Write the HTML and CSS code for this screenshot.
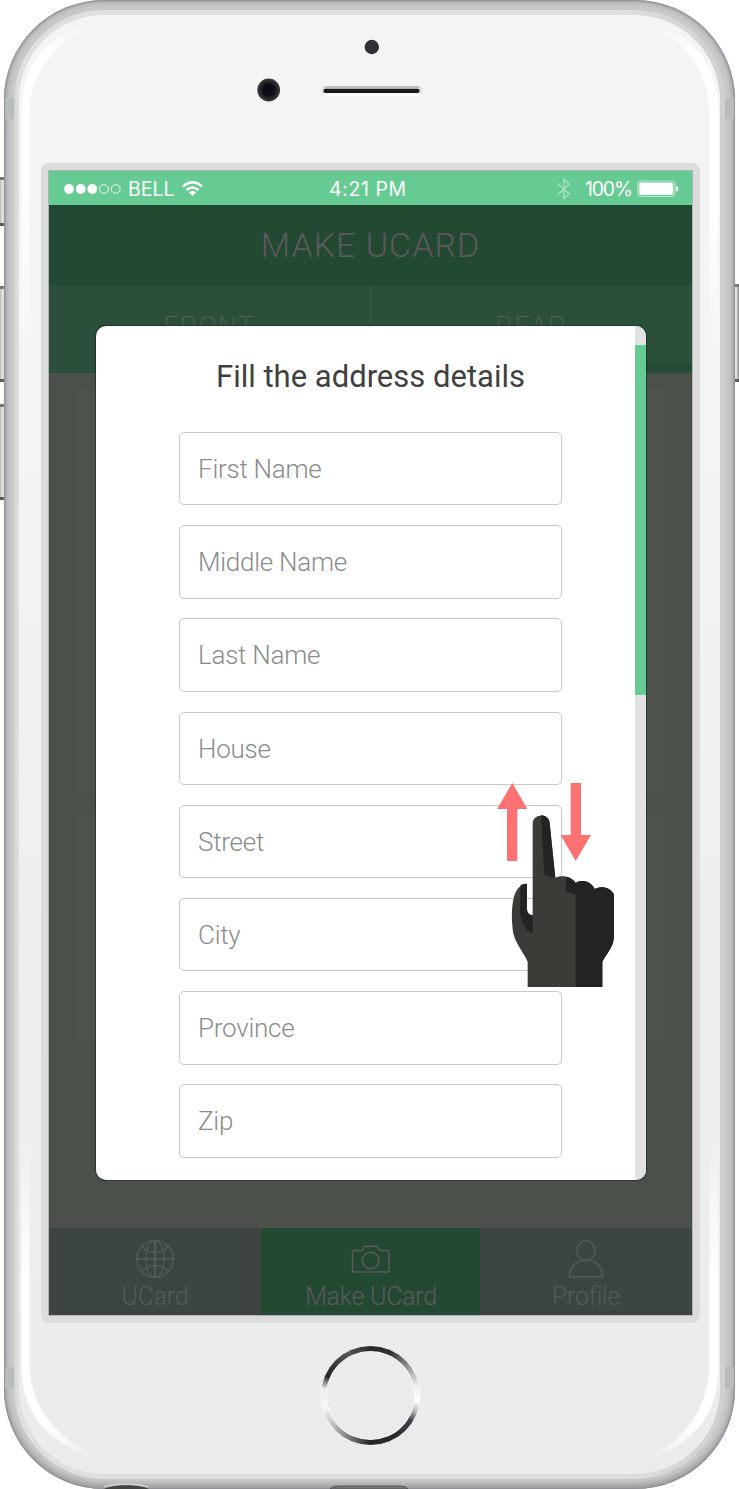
FILE: index.html
```html
<!DOCTYPE html>
<html lang="en">
<head>
<meta charset="utf-8">
<title>Make UCard</title>
<link rel="stylesheet" href="styles.css">
</head>
<body>
<div class="stage">
  <i class="side-btn mute"></i><i class="side-btn vol-up"></i><i class="side-btn vol-down"></i><i class="side-btn power"></i>
  <div class="phone">
    <i class="antenna a1"></i><i class="antenna a2"></i><i class="antenna a3"></i><i class="antenna a4"></i>
    <div class="rim">
      <div class="face">
        <div class="top-hardware">
          <svg width="170" height="72" viewBox="255 35 170 72">
            <defs><radialGradient id="lens"><stop offset=".45" stop-color="#0d0b16"/><stop offset=".75" stop-color="#262727"/><stop offset="1" stop-color="#3d3d3d"/></radialGradient></defs>
            <circle cx="371.800" cy="47" r="7.200" fill="#303136"/>
            <circle cx="268.700" cy="90" r="11.400" fill="url(#lens)"/>
            <rect x="321.500" y="86" width="100" height="9" rx="4" fill="#dedede"/>
            <rect x="325" y="86" width="94" height="2" fill="#bdbdbd"/>
            <rect x="324" y="93.500" width="96" height="2" fill="#fff"/>
            <rect x="323.500" y="88.700" width="96" height="4.400" rx="2" fill="#191919"/>
          </svg>
        </div>
        <div class="bezel">
          <div class="screen">
            <div class="status">
              <svg class="signal" width="58" height="12" viewBox="0 0 58 12"><g fill="#fff"><circle cx="5" cy="6" r="4.900"/><circle cx="16.700" cy="6" r="4.900"/><circle cx="28.300" cy="6" r="4.900"/></g><g fill="none" stroke="#fff" stroke-width=".9"><circle cx="40" cy="6" r="4.400"/><circle cx="51.700" cy="6" r="4.400"/></g></svg>
              <span class="carrier">BELL</span>
              <svg class="wifi" width="21" height="16" viewBox="0 0 21 16"><g fill="none" stroke="#fff" stroke-width="2.300"><path d="M1 5.300Q10.500-2.700 20 5.300"/><path d="M4.500 9Q10.500 3.900 16.500 9"/></g><path d="M6.700 11.300Q10.500 8.300 14.300 11.300L10.500 15z" fill="#fff"/></svg>
              <span class="clock">4:21 PM</span>
              <svg class="bt" width="13" height="22" viewBox="0 0 13 22"><path d="M.8 5.500L12 16L6.800 20.800V1.200L12 6L.8 16.500" fill="none" stroke="#a9e2c1" stroke-width="1.300"/></svg>
              <span class="pct">100%</span>
              <svg class="battery" width="42" height="18" viewBox="0 0 42 18"><rect x=".8" y="1" width="37" height="15.500" rx="3.500" fill="none" stroke="#b7e8cb" stroke-width="1.200"/><rect x="2.300" y="2.400" width="34" height="12.700" rx="2" fill="#fff"/><path d="M39 6Q41.500 6.300 41.500 8.700T39 11.500z" fill="#fff"/></svg>
            </div>
            <div class="title-bar">MAKE UCARD</div>
            <div class="tabs"><div class="tab">FRONT</div><div class="tab rear">REAR</div></div>
            <div class="content"><div class="card tall"></div><div class="card"></div></div>
            <div class="nav">
              <div class="nav-item">
                <svg width="40" height="40" viewBox="0 0 40 40"><g fill="none" stroke="currentColor" stroke-width="1.300"><circle cx="20" cy="20" r="18.300"/><ellipse cx="20" cy="20" rx="9.300" ry="18.300"/><path d="M19.400 2V38M20.600 2V38M2 20H38M7 7.500Q12 13.500 20 13.500T33 7.500M7 32.500Q12 26.500 20 26.500T33 32.500"/></g></svg>
                <span>UCard</span>
              </div>
              <div class="nav-item active">
                <svg width="40" height="40" viewBox="0 0 40 40"><g fill="none" stroke="currentColor" stroke-width="1.500"><path d="M3.500 11.500H11L14 7.200H25.500L29 11.500H36Q38 11.500 38 13.500V31Q38 33 36 33H3.500Q1.500 33 1.500 31V13.500Q1.500 11.500 3.500 11.500Z"/><circle cx="19.700" cy="21.500" r="8.300"/></g></svg>
                <span>Make UCard</span>
              </div>
              <div class="nav-item">
                <svg width="40" height="40" viewBox="0 0 40 40"><g fill="none" stroke="currentColor" stroke-width="1.500"><ellipse cx="20" cy="11.500" rx="9.200" ry="9.700"/><path d="M3.500 37.800Q3.500 22 20 21.500Q36.500 22 36.500 37.800Z"/></g></svg>
                <span>Profile</span>
              </div>
            </div>
            <div class="modal">
              <div class="form">
                <h1>Fill the address details</h1>
                <div class="field">First Name</div>
                <div class="field">Middle Name</div>
                <div class="field">Last Name</div>
                <div class="field">House</div>
                <div class="field">Street</div>
                <div class="field">City</div>
                <div class="field">Province</div>
                <div class="field">Zip</div>
              </div>
              <div class="track"><div class="thumb"></div></div>
            </div>
          </div>
        </div>
        <div class="home"><div class="home-inner"></div></div>
      </div>
    </div>
  </div>
  <svg class="gloss" width="739" height="1489" viewBox="0 0 739 1489">
    <defs>
      <linearGradient id="gt" gradientUnits="userSpaceOnUse" x1="0" y1="24" x2="0" y2="370"><stop offset="0" stop-color="#fff" stop-opacity="0"/><stop offset=".09" stop-color="#fff"/><stop offset=".5" stop-color="#fff"/><stop offset="1" stop-color="#fff" stop-opacity="0"/></linearGradient>
      <linearGradient id="gb" gradientUnits="userSpaceOnUse" x1="0" y1="1130" x2="0" y2="1462"><stop offset="0" stop-color="#fff" stop-opacity="0"/><stop offset=".45" stop-color="#fff"/><stop offset=".88" stop-color="#fff"/><stop offset="1" stop-color="#fff" stop-opacity="0"/></linearGradient>
    </defs>
    <path fill="url(#gt)" d="M105 22C50 28 21.500 62 21.500 112V370H29.500V112C30 70 60 35 105 22Z"/>
    <path fill="url(#gt)" d="M640 22C690 30 718.500 62 718.500 112V370H709.500V112C708 70 685 37 640 22Z"/>
    <path fill="url(#gb)" d="M108 1461C55 1450 21.500 1420 21.500 1365V1130H29.500V1365C30 1410 60 1443 108 1461Z"/>
    <path fill="url(#gb)" d="M632 1463C690 1450 718.500 1420 718.500 1365V1130H709.500V1365C709 1410 680 1450 632 1463Z"/>
    <path d="M104 1489C114 1484 138 1484 149 1489Z" fill="#45433f"/><path d="M104 1487C114 1483 138 1483 148 1487" fill="none" stroke="#d0d3d1" stroke-width="1.300"/>
    <path d="M330 1489Q332 1486 338 1486H400Q406 1486 408 1489Z" fill="#77777a" stroke="#4b4a4b" stroke-width=".8"/>
  </svg>
  <svg class="gesture" width="150" height="230" viewBox="0 0 450 690">
    <path d="M97 39L142 117H112V273H81V117H51ZM287 273L242 195H272V39H303V195H333Z" fill="#fc7273"/>
    <path d="M158 162C158 128 208 128 209 160L226 324C242 315 272 316 287 339C303 328 333 332 344 357C364 346 393 352 402 374V496C402 530 382 548 367 575V651H143V575C130 545 99 512 98 477C94 444 95 410 101 385C106 358 122 342 141 341V420Q143 435 158 436Z" fill="#3a3a37"/>
    <path d="M183 136C200 137 208 147 209 160L226 324L193 314ZM258 320Q278 324 287 339C303 328 333 332 344 357C364 346 393 352 402 374V496C402 530 382 548 367 575V651H287V374L258 364ZM122 345Q131 341 141 341V420Q143 435 158 436V490C134 481 120 449 120 425Z" fill="#232321"/>
  </svg>
</div>
</body>
</html>
```
FILE: styles.css
```css
* { box-sizing: border-box; }
body { margin: 0; background: #fff; font-family: Roboto, "Liberation Sans", sans-serif; overflow: hidden; }
svg { display: block; flex: none; }
.stage { position: relative; width: 739px; height: 1489px; overflow: hidden; }
.phone { position: relative; width: 731px; height: 1489px; margin: 0 4px; padding: 10px; border-radius: 100px; background: #c9cacc; box-shadow: inset 0 0 2px 1px #8b8c8f, inset 0 0 7px 2px #a8a9ac, inset 0 -4px 6px #97989a; }
.rim { height: 1469px; padding: 5px; border-radius: 90px; background: linear-gradient(90deg, #d3d5d4, #dee0de 4px, #dee0de 600px, #cfd1d0); box-shadow: 0 0 1px #b9bbbb; }
.face { height: 1459px; border-radius: 85px; background: linear-gradient(#f4f4f4, #f3f4f4 25%, #eef0ef 60%, #eaeceb); display: flex; flex-direction: column; align-items: center; }
.top-hardware { height: 148px; padding-top: 20px; width: 229px; }
.bezel { width: 659px; height: 1160px; padding: 7px; border-radius: 8px; background: #dcdcdc; margin-left: 2px; }
.screen { position: relative; height: 1146px; border: 1px solid #b3b3b3; display: flex; flex-direction: column; background: #4b504b; }
.status { height: 35px; background: #66cb92; border-bottom: 1px solid #1f4730; display: flex; align-items: center; color: #fff; font-family: Inter, "Liberation Sans", sans-serif; font-size: 19.500px; padding: 1px 0 0 15px; }
.carrier { margin-left: 6px; width: 48px; }
.wifi { margin-left: 6px; }
.clock { margin-left: 126px; width: 86px; white-space: nowrap; letter-spacing: .6px; }
.bt { margin-left: 142px; }
.pct { margin-left: 15px; width: 52px; letter-spacing: -1.200px; font-size: 19.500px; }
.title-bar { height: 80px; background: #244933; color: #5a5a5a; font-weight: 300; font-size: 34px; letter-spacing: 1px; text-align: center; line-height: 79px; }
.tabs { height: 87px; display: flex; background: #2b4f3a; color: #56605a; font-weight: 200; font-size: 26px; letter-spacing: 1.800px; }
.tab { flex: 1; text-align: center; padding-top: 25px; }
.rear { border-left: 1px solid #48564c; box-shadow: inset 0 -10px #264a34; }
.content { height: 855px; padding: 17px 27px; display: flex; flex-direction: column; gap: 22px; }
.card { height: 225px; background: #4e534e; }
.tall { height: 403px; }
.nav { height: 87px; display: grid; grid-template-columns: 213px 218px 1fr; background: #3c4540; color: #535a56; font-weight: 300; font-size: 25px; }
.nav-item { display: flex; flex-direction: column; align-items: center; padding-top: 11px; line-height: 35px; letter-spacing: -.250px; }
.nav-item:first-child { padding-right: 1px; }
.active { background: #244933; color: #5a5a5a; }
.modal { position: absolute; left: 47px; top: 155px; width: 550px; height: 854px; border-radius: 10px; overflow: hidden; background: #fff; display: flex; box-shadow: 0 0 1px 1px rgba(10, 40, 24, .55); }
.form { flex: 1; padding: 0 73px 0 83px; display: flex; flex-direction: column; gap: 19.700px; }
h1 { margin: 0 0 11.300px; height: 75px; padding-top: 31px; font-size: 31px; line-height: 40px; font-weight: 400; letter-spacing: 0; color: #404040; text-align: center; white-space: nowrap; }
.field { flex: none; height: 73.500px; border: 1px solid #c9c9c9; border-radius: 5px; padding-left: 18px; line-height: 73px; font-size: 26px; font-weight: 300; letter-spacing: -.250px; color: #8b8b8b; }
.track { width: 11px; padding-top: 19px; background: #e2e2e2; }
.thumb { height: 350px; background: #66cb92; }
.home { width: 101px; height: 101px; margin-top: 22px; margin-left: 1px; border-radius: 50%; padding: 6px; border: 1px solid #f4f5f5; background: conic-gradient(#27282a, #303033 25deg, #929395 52deg, #ededee 78deg, #fff 97deg, #b8b8bb 109deg, #41414a 122deg, #2b2b2e 145deg, #252527 180deg, #707173 204deg, #b9babb 230deg, #f6f6f7 255deg, #eee 278deg, #242426 294deg, #47484c 320deg, #56575b 333deg, #27282a); }
.home-inner { height: 87px; border-radius: 50%; background: #eaeceb; box-shadow: 0 0 0 1px #f6f7f7; }
.gloss { position: absolute; left: 0; top: 0; }
.gesture { position: absolute; left: 480px; top: 770px; }
.side-btn { position: absolute; left: 0; width: 7px; background: linear-gradient(90deg, #b9babb, #eee 45%, #99999b 75%, #77787a); border-top: 3px solid #77787b; border-bottom: 3px solid #5c5d60; }
.mute { top: 177px; height: 49px; }
.vol-up { top: 286px; height: 96px; }
.vol-down { top: 404px; height: 96px; }
.power { left: 733px; top: 284px; height: 98px; }
.antenna { position: absolute; width: 9px; height: 21px; background: #b9bdba; }
.a1 { left: 1px; top: 98px; } .a2 { right: 1px; top: 98px; } .a3 { left: 1px; top: 1367px; } .a4 { right: 1px; top: 1367px; }
```
